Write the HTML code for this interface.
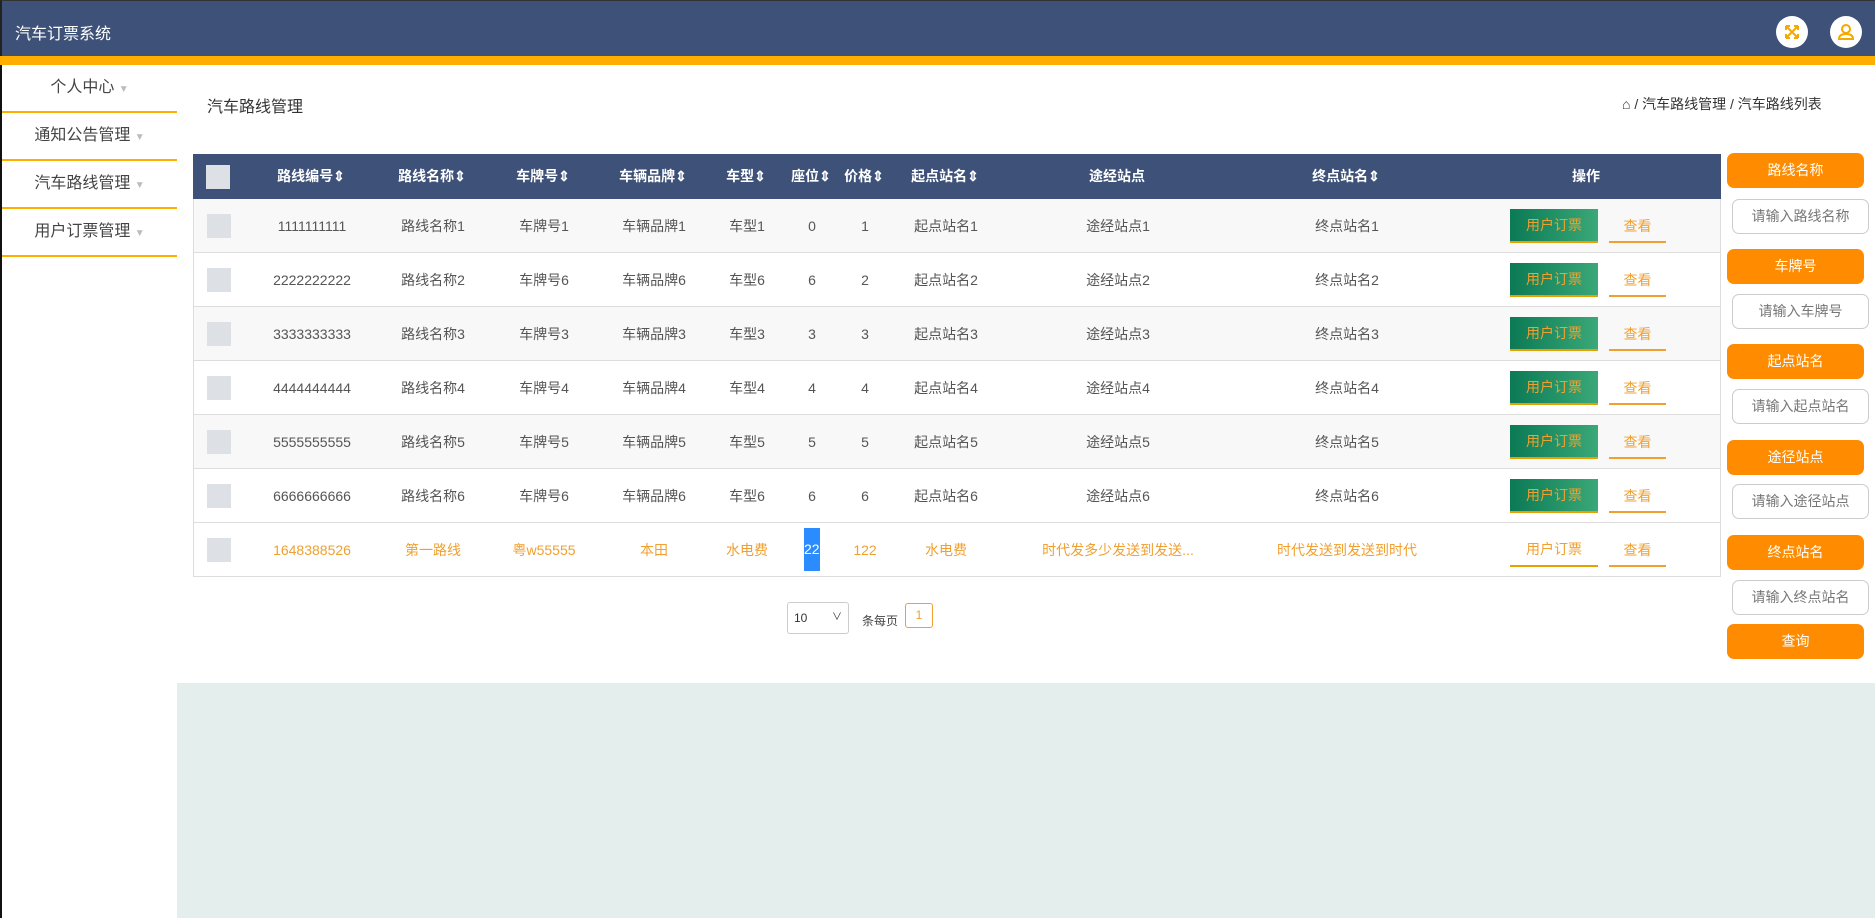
<!DOCTYPE html>
<html><head><meta charset="utf-8"><style>
*{margin:0;padding:0;box-sizing:border-box}
body{width:1875px;height:918px;position:relative;overflow:hidden;background:#fff;font-family:"Liberation Sans","Noto Sans CJK SC",sans-serif;font-size:14px;color:#555}
.a{position:absolute}
.hdr{left:0;top:0;width:1875px;height:56px;background:#3e5279;border-left:2px solid #222;border-top:1px solid #333}
.band{left:0;top:56px;width:1875px;height:9px;background:#ffae00}
.lb{left:0;top:65px;width:2px;height:853px;background:#111}
.side{left:2px;width:175px;height:48px;border-bottom:2px solid #ffae00;text-align:center;line-height:46px;font-size:16px;color:#444}
.side span{color:#bbb;font-size:10px}
.tbl{left:193px;top:154px;width:1528px;height:423px;border:1px solid #ddd;border-top:none}
.th{left:193px;top:154px;width:1528px;height:45px;background:#3e5279}
.row{left:194px;width:1526px;height:54px;border-bottom:1px solid #ddd}
.c{position:absolute;transform:translateX(-50%);white-space:nowrap;top:0;line-height:54px}
.h{color:#fff;font-weight:bold;line-height:45px;font-size:14px}
.cb{position:absolute;left:13px;width:24px;height:24px;background:#dde0e5}
.btn{position:absolute;left:1316px;top:10px;width:88px;height:34px;background:linear-gradient(90deg,#0b7a55,#3aa877);border-bottom:2px solid #e8a000;color:#f0a030;text-align:center;line-height:32px}
.see{position:absolute;left:1415px;top:12px;width:57px;height:32px;border-bottom:2px solid #f0a030;color:#f0a030;text-align:center;line-height:30px}
.ob{left:1727px;width:137px;height:35px;background:#ff8c00;border-radius:7px;color:#fff;text-align:center;line-height:35px;font-size:14px}
.ip{left:1732px;width:137px;height:35px;border:1px solid #ccc;border-radius:7px;color:#777;text-align:center;line-height:33px;font-size:14px}
</style></head><body>
<div class="a hdr"><div class="a" style="left:13px;top:19px;color:#fff;font-size:16px">汽车订票系统</div></div>
<div class="a" style="left:1776px;top:16px;width:32px;height:32px;border-radius:50%;background:#fff"><svg width="32" height="32" viewBox="0 0 32 32" fill="none" stroke="#f5a800" stroke-width="2"><path d="M10 10l12 12M22 10L10 22M10 10h4M10 10v4M22 10h-4M22 10v4M10 22h4M10 22v-4M22 22h-4M22 22v-4"/></svg></div>
<div class="a" style="left:1830px;top:16px;width:32px;height:32px;border-radius:50%;background:#fff"><svg width="32" height="32" viewBox="0 0 32 32" fill="none" stroke="#f5a800" stroke-width="2"><circle cx="16" cy="13" r="4"/><path d="M9 23q0-5 7-5t7 5z"/></svg></div>
<div class="a band"></div>
<div class="a lb"></div>
<div class="a side" style="top:65px">个人中心 <span>▼</span></div>
<div class="a side" style="top:113px">通知公告管理 <span>▼</span></div>
<div class="a side" style="top:161px">汽车路线管理 <span>▼</span></div>
<div class="a side" style="top:209px">用户订票管理 <span>▼</span></div>
<div class="a" style="left:207px;top:93px;font-size:16px;color:#333">汽车路线管理</div>
<div class="a" style="left:1622px;top:94px;font-size:14px;color:#333">⌂ / 汽车路线管理 / 汽车路线列表</div>
<div class="a tbl"></div>
<div class="a th">
<div class="cb" style="top:11px"></div>
<div class="c h" style="left:118px">路线编号⇕</div><div class="c h" style="left:239px">路线名称⇕</div><div class="c h" style="left:350px">车牌号⇕</div><div class="c h" style="left:460px">车辆品牌⇕</div><div class="c h" style="left:553px">车型⇕</div><div class="c h" style="left:618px">座位⇕</div><div class="c h" style="left:671px">价格⇕</div><div class="c h" style="left:752px">起点站名⇕</div><div class="c h" style="left:924px">途经站点</div><div class="c h" style="left:1153px">终点站名⇕</div><div class="c h" style="left:1393px">操作</div>
</div>
<div class="a row" style="top:199px;background:#f8f8f8"><div class="cb" style="top:15px"></div><div class="c" style="left:118px">1111111111</div><div class="c" style="left:239px">路线名称1</div><div class="c" style="left:350px">车牌号1</div><div class="c" style="left:460px">车辆品牌1</div><div class="c" style="left:553px">车型1</div><div class="c" style="left:618px">0</div><div class="c" style="left:671px">1</div><div class="c" style="left:752px">起点站名1</div><div class="c" style="left:924px">途经站点1</div><div class="c" style="left:1153px">终点站名1</div><div class="btn">用户订票</div><div class="see">查看</div></div>
<div class="a row" style="top:253px"><div class="cb" style="top:15px"></div><div class="c" style="left:118px">2222222222</div><div class="c" style="left:239px">路线名称2</div><div class="c" style="left:350px">车牌号6</div><div class="c" style="left:460px">车辆品牌6</div><div class="c" style="left:553px">车型6</div><div class="c" style="left:618px">6</div><div class="c" style="left:671px">2</div><div class="c" style="left:752px">起点站名2</div><div class="c" style="left:924px">途经站点2</div><div class="c" style="left:1153px">终点站名2</div><div class="btn">用户订票</div><div class="see">查看</div></div>
<div class="a row" style="top:307px;background:#f8f8f8"><div class="cb" style="top:15px"></div><div class="c" style="left:118px">3333333333</div><div class="c" style="left:239px">路线名称3</div><div class="c" style="left:350px">车牌号3</div><div class="c" style="left:460px">车辆品牌3</div><div class="c" style="left:553px">车型3</div><div class="c" style="left:618px">3</div><div class="c" style="left:671px">3</div><div class="c" style="left:752px">起点站名3</div><div class="c" style="left:924px">途经站点3</div><div class="c" style="left:1153px">终点站名3</div><div class="btn">用户订票</div><div class="see">查看</div></div>
<div class="a row" style="top:361px"><div class="cb" style="top:15px"></div><div class="c" style="left:118px">4444444444</div><div class="c" style="left:239px">路线名称4</div><div class="c" style="left:350px">车牌号4</div><div class="c" style="left:460px">车辆品牌4</div><div class="c" style="left:553px">车型4</div><div class="c" style="left:618px">4</div><div class="c" style="left:671px">4</div><div class="c" style="left:752px">起点站名4</div><div class="c" style="left:924px">途经站点4</div><div class="c" style="left:1153px">终点站名4</div><div class="btn">用户订票</div><div class="see">查看</div></div>
<div class="a row" style="top:415px;background:#f8f8f8"><div class="cb" style="top:15px"></div><div class="c" style="left:118px">5555555555</div><div class="c" style="left:239px">路线名称5</div><div class="c" style="left:350px">车牌号5</div><div class="c" style="left:460px">车辆品牌5</div><div class="c" style="left:553px">车型5</div><div class="c" style="left:618px">5</div><div class="c" style="left:671px">5</div><div class="c" style="left:752px">起点站名5</div><div class="c" style="left:924px">途经站点5</div><div class="c" style="left:1153px">终点站名5</div><div class="btn">用户订票</div><div class="see">查看</div></div>
<div class="a row" style="top:469px"><div class="cb" style="top:15px"></div><div class="c" style="left:118px">6666666666</div><div class="c" style="left:239px">路线名称6</div><div class="c" style="left:350px">车牌号6</div><div class="c" style="left:460px">车辆品牌6</div><div class="c" style="left:553px">车型6</div><div class="c" style="left:618px">6</div><div class="c" style="left:671px">6</div><div class="c" style="left:752px">起点站名6</div><div class="c" style="left:924px">途经站点6</div><div class="c" style="left:1153px">终点站名6</div><div class="btn">用户订票</div><div class="see">查看</div></div>
<div class="a row" style="top:523px;color:#f0a030;border-bottom:none"><div class="cb" style="top:15px"></div><div class="c" style="left:118px">1648388526</div><div class="c" style="left:239px">第一路线</div><div class="c" style="left:350px">粤w55555</div><div class="c" style="left:460px">本田</div><div class="c" style="left:553px">水电费</div><div class="a" style="left:610px;top:5px;width:16px;height:43px;background:#2b8cff;color:#fff;line-height:43px">22</div><div class="c" style="left:671px">122</div><div class="c" style="left:752px">水电费</div><div class="c" style="left:924px">时代发多少发送到发送...</div><div class="c" style="left:1153px">时代发送到发送到时代</div><div class="btn" style="background:none">用户订票</div><div class="see">查看</div></div>
<div class="a" style="left:787px;top:602px;width:62px;height:32px;border:1px solid #ccc;border-radius:3px;font-size:12px;line-height:30px;padding-left:6px;color:#333">10<span style="position:absolute;right:6px;font-size:10px">∨</span></div>
<div class="a" style="left:862px;top:612px;font-size:12px;color:#444">条每页</div>
<div class="a" style="left:905px;top:603px;width:28px;height:25px;border:1px solid #f0a030;border-radius:3px;color:#f0a030;text-align:center;line-height:23px;font-size:12px">1</div>
<div class="a" style="left:177px;top:683px;width:1698px;height:235px;background:#e4efed"></div>
<div class="a ob" style="top:153px">路线名称</div><div class="a ip" style="top:199px">请输入路线名称</div>
<div class="a ob" style="top:249px">车牌号</div><div class="a ip" style="top:294px">请输入车牌号</div>
<div class="a ob" style="top:344px">起点站名</div><div class="a ip" style="top:389px">请输入起点站名</div>
<div class="a ob" style="top:440px">途径站点</div><div class="a ip" style="top:484px">请输入途径站点</div>
<div class="a ob" style="top:535px">终点站名</div><div class="a ip" style="top:580px">请输入终点站名</div>
<div class="a ob" style="top:624px">查询</div>
</body></html>
